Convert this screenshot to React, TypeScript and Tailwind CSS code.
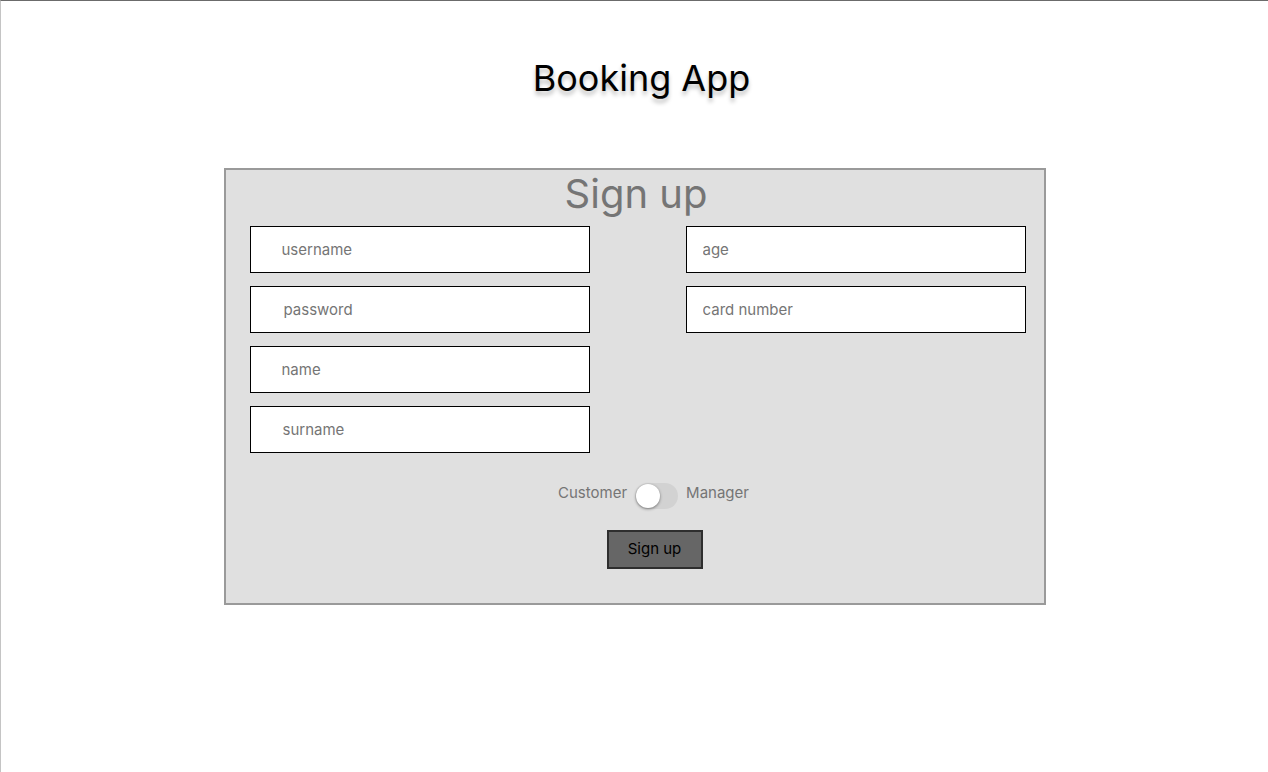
import { useState } from "react";

const leftFields = [
  { name: "username", pad: "pl-[31px]" },
  { name: "password", pad: "pl-[33px]" },
  { name: "name", pad: "pl-[31px]" },
  { name: "surname", pad: "pl-[32px]" },
];

const rightFields = ["age", "card number"];

function Field({ placeholder, pad }: { placeholder: string; pad: string }) {
  return (
    <input
      type="text"
      placeholder={placeholder}
      className={`h-[47px] w-[340px] border-[1.5px] border-black bg-white ${pad} text-[15px] text-black outline-none placeholder:text-[#757575]`}
    />
  );
}

export default function App() {
  const [manager, setManager] = useState(false);

  return (
    <div className="min-h-[772px] border-t border-l border-t-[#6b6b6b] border-l-[#c4c4c4] bg-white font-['Inter',sans-serif]">
      {/* Header */}
      <h1 className="pt-[55px] pl-[14px] text-center text-[36px] leading-[44px] font-normal text-black [text-shadow:0_4px_4px_rgba(0,0,0,0.25)]">
        Booking App
      </h1>

      {/* Sign up card */}
      <div className="mx-auto mt-[68px] w-[822px] border-2 border-[#9a9a9a] bg-[#e0e0e0] pb-[34px]">
        <h2 className="pl-[3px] text-center text-[40px] leading-[48px] font-normal text-[#757575]">
          Sign up
        </h2>

        <div className="mt-[8px] flex gap-[96px] pl-[24px]">
          <div className="flex flex-col gap-[13px]">
            {leftFields.map((f) => (
              <Field key={f.name} placeholder={f.name} pad={f.pad} />
            ))}
          </div>
          <div className="flex flex-col gap-[13px]">
            {rightFields.map((f) => (
              <Field key={f} placeholder={f} pad="pl-4" />
            ))}
          </div>
        </div>

        {/* Role toggle */}
        <div className="mt-[30px] flex items-start justify-center gap-2 pl-[38px] text-[15px] leading-[20px] text-[#757575]">
          <span>Customer</span>
          <button
            type="button"
            onClick={() => setManager((m) => !m)}
            className="relative h-[26px] w-[43px] rounded-full bg-[#d2d2d2]"
            aria-label="Toggle role"
          >
            <span
              className={`absolute top-px h-[24px] w-[24px] rounded-full bg-white shadow-[0_1px_3px_rgba(0,0,0,0.45)] ${
                manager ? "left-[18px]" : "left-px"
              }`}
            />
          </button>
          <span>Manager</span>
        </div>

        <div className="mt-[21px] flex justify-center pl-[40px]">
          <button
            type="button"
            className="h-[39px] w-[96px] border-2 border-[#2e2e2e] bg-[#666666] text-[15px] text-black"
          >
            Sign up
          </button>
        </div>
      </div>
    </div>
  );
}
